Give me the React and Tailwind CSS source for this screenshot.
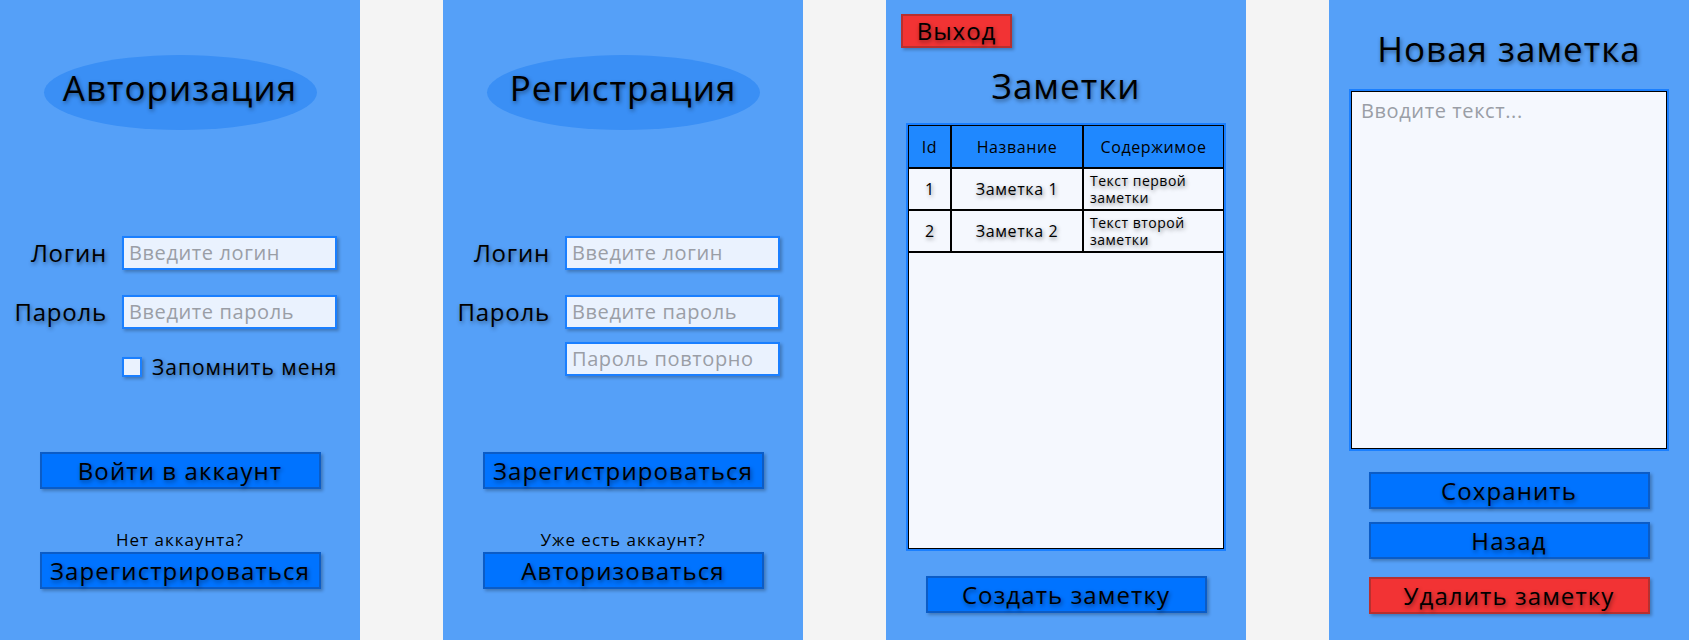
const shadow = '[text-shadow:1px_2px_4px_rgba(0,0,0,0.45)]';

const Ellipse = ({ children }) => (
  <div className="mx-auto mt-[55px] flex h-[75px] w-[273px] items-center justify-center rounded-[50%] bg-[#3a8ff5]">
    <h1 className={`text-[35px] leading-none text-black tracking-[1px] pb-[10px] ${shadow}`}>{children}</h1>
  </div>
);

const Field = ({ label, placeholder, className = '' }) => (
  <div className={`flex h-[34px] items-center ${className}`}>
    <span className={`w-[107px] text-right text-[24px] leading-none tracking-[0.8px] text-black ${shadow}`}>{label}</span>
    <div className="ml-[15px] flex h-[34px] w-[215px] items-center border-2 border-[#1a7fff] bg-[#eaf2fe] px-[5px] shadow-[2px_2px_3px_rgba(0,0,0,0.25)]">
      <span className="text-[20px] tracking-[0.6px] text-[#9a9ea6]">{placeholder}</span>
    </div>
  </div>
);

const Button = ({ children, red = false, className = '' }) => (
  <div
    className={`mx-auto flex h-[37px] w-[281px] items-center justify-center border-2 shadow-[2px_2px_3px_rgba(0,0,0,0.25)] ${
      red ? 'border-[#b8302f] bg-[#f23334]' : 'border-[#0b5cc6] bg-[#0073ff]'
    } ${className}`}
  >
    <span className={`text-[24px] tracking-[1.1px] text-black ${shadow}`}>{children}</span>
  </div>
);

const Panel = ({ children }) => (
  <div className="flex h-[640px] w-[360px] shrink-0 flex-col bg-[#55a0f8]">{children}</div>
);

const notes = [
  { id: 1, name: 'Заметка 1', text: 'Текст первой заметки' },
  { id: 2, name: 'Заметка 2', text: 'Текст второй заметки' },
];

export default function App() {
  return (
    <div className="flex h-[640px] w-[1689px] gap-[83px] overflow-hidden bg-[#f4f4f4] font-['Open_Sans',sans-serif]">
      <Panel>
        <Ellipse>Авторизация</Ellipse>
        <Field className="mt-[106px]" label="Логин" placeholder="Введите логин" />
        <Field className="mt-[25px]" label="Пароль" placeholder="Введите пароль" />
        <div className="ml-[122px] mt-[28px] flex h-[20px] items-center">
          <div className="h-[20px] w-[20px] border-2 border-[#1a7fff] bg-[#eaf2fe] shadow-[2px_2px_3px_rgba(0,0,0,0.25)]" />
          <span className={`ml-[10px] text-[21px] leading-none tracking-[1px] text-black ${shadow}`}>Запомнить меня</span>
        </div>
        <Button className="mt-[75px]">Войти в аккаунт</Button>
        <p className="mt-[40px] text-center text-[17px] leading-[22px] tracking-[1px] text-black">Нет аккаунта?</p>
        <Button className="mt-[1px]">Зарегистрироваться</Button>
      </Panel>

      <Panel>
        <Ellipse>Регистрация</Ellipse>
        <Field className="mt-[106px]" label="Логин" placeholder="Введите логин" />
        <Field className="mt-[25px]" label="Пароль" placeholder="Введите пароль" />
        <div className="ml-[122px] mt-[13px] flex h-[34px] w-[215px] items-center border-2 border-[#1a7fff] bg-[#eaf2fe] px-[5px] shadow-[2px_2px_3px_rgba(0,0,0,0.25)]">
          <span className="text-[20px] tracking-[0.6px] text-[#9a9ea6]">Пароль повторно</span>
        </div>
        <Button className="mt-[76px]">Зарегистрироваться</Button>
        <p className="mt-[40px] text-center text-[17px] leading-[22px] tracking-[1px] text-black">Уже есть аккаунт?</p>
        <Button className="mt-[1px]">Авторизоваться</Button>
      </Panel>

      <Panel>
        <div className="ml-[15px] mt-[14px] flex h-[34px] w-[111px] items-center justify-center border-2 border-[#b8302f] bg-[#f23334] shadow-[2px_2px_3px_rgba(0,0,0,0.25)]">
          <span className={`text-[24px] tracking-[1px] text-black ${shadow}`}>Выход</span>
        </div>
        <h1 className={`mt-[16px] text-center text-[35px] leading-[44px] tracking-[1px] text-black ${shadow}`}>Заметки</h1>
        <div className="mx-auto mt-[15px] h-[428px] w-[320px] border-2 border-[#1a7fff]">
          <div className="h-full w-full border border-black bg-[#f5f8fe]">
            <table className="w-full border-collapse">
              <thead>
                <tr className="h-[42px] bg-[#1f88ff] text-[16px] tracking-[0.6px] text-black">
                  <th className="w-[42px] border-b-2 border-r-2 border-black font-normal">Id</th>
                  <th className="w-[132px] border-b-2 border-r-2 border-black font-normal">Название</th>
                  <th className="border-b-2 border-black font-normal">Содержимое</th>
                </tr>
              </thead>
              <tbody>
                {notes.map((n) => (
                  <tr key={n.id} className="h-[42px] text-black">
                    <td className={`border-b-2 border-r-2 border-black text-center text-[16px] ${shadow}`}>{n.id}</td>
                    <td className={`border-b-2 border-r-2 border-black text-center text-[16px] tracking-[0.6px] ${shadow}`}>{n.name}</td>
                    <td className={`border-b-2 border-black px-[6px] text-[14px] leading-[17px] tracking-[0.5px] ${shadow}`}>{n.text}</td>
                  </tr>
                ))}
              </tbody>
            </table>
          </div>
        </div>
        <Button className="mt-[25px] h-[36px]">Создать заметку</Button>
      </Panel>

      <Panel>
        <h1 className={`mt-[24px] text-center text-[35px] leading-[50px] tracking-[1px] text-black ${shadow}`}>Новая заметка</h1>
        <div className="mx-auto mt-[15px] h-[362px] w-[320px] border-2 border-[#1a7fff]">
          <div className="h-full w-full border border-black bg-[#f5f8fe] px-[9px] pt-[4px]">
            <span className="text-[20px] tracking-[0.6px] text-[#9a9ea6]">Вводите текст...</span>
          </div>
        </div>
        <Button className="mt-[21px]">Сохранить</Button>
        <Button className="mt-[13px]">Назад</Button>
        <Button red className="mt-[18px] h-[36px]">Удалить заметку</Button>
      </Panel>
    </div>
  );
}
